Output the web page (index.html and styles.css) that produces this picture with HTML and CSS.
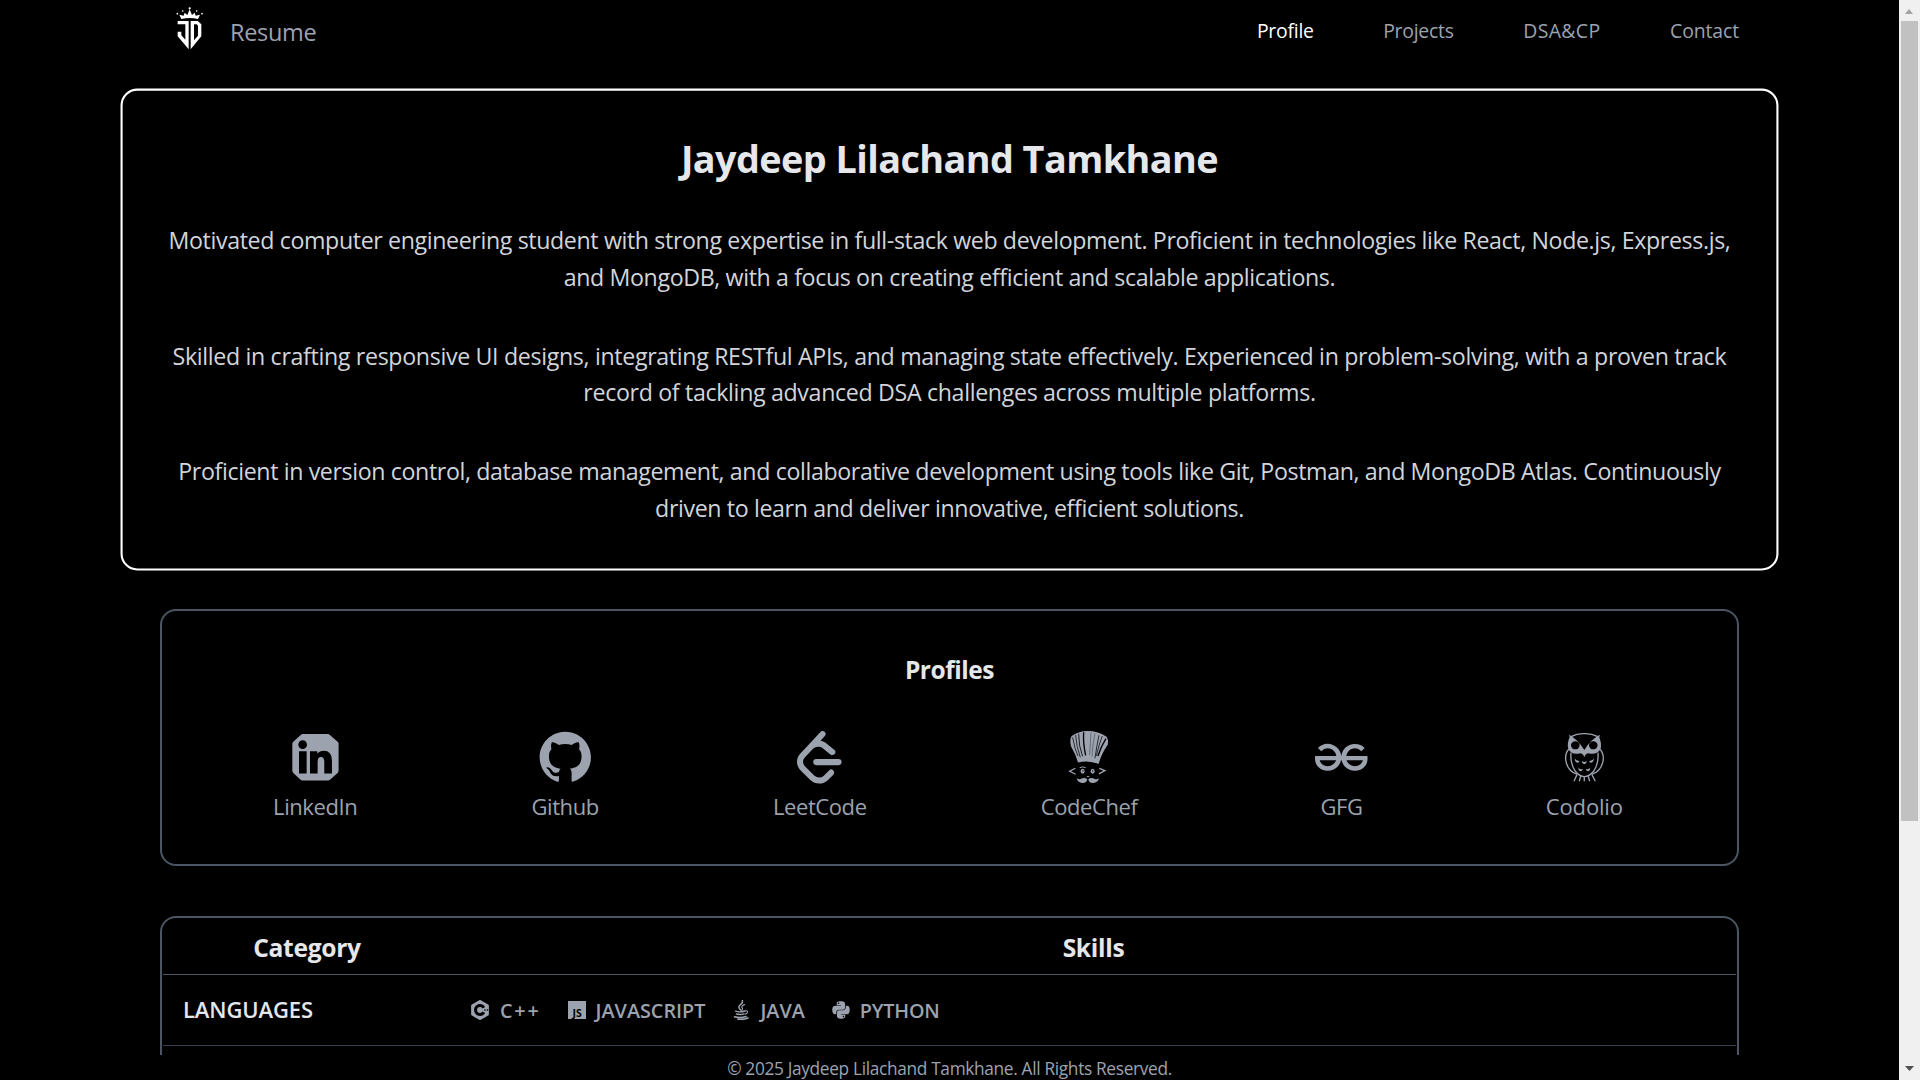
FILE: index.html
```
<!DOCTYPE html>
<html lang="en">
<head>
<meta charset="utf-8">
<title>Resume</title>
<link rel="stylesheet" href="styles.css">
</head>
<body>
<div class="viewport">
  <div class="page">
    <header class="navbar">
      <a class="brand">
        <svg class="logo" viewBox="48 18 84 132">
          <path fill="#fff" d="M64 57L58 44L71 47L74 38L82 45L89 28L96 45L104 38L107 47L120 44L114 57Q89 51 64 57z"/>
          <g fill="#fff"><circle cx="52" cy="41" r="2.5"/><circle cx="68" cy="33" r="2.5"/><circle cx="89" cy="25" r="3.4"/><circle cx="110" cy="33" r="2.5"/><circle cx="126" cy="41" r="2.5"/></g>
          <path fill="#fff" d="M53 63H86V148L53 109V95H64V106L76 119V73H53zM92 63H113L124 73V109L92 148zM102 73V121L114 107V77L110 73z" fill-rule="evenodd"/>
        </svg>
        <span class="brand-name">Resume</span>
      </a>
      <nav class="links">
        <a class="link active">Profile</a>
        <a class="link">Projects</a>
        <a class="link wide">DSA&amp;CP</a>
        <a class="link">Contact</a>
      </nav>
    </header>

    <main class="content">
      <section class="hero">
        <h1 class="hero-title">Jaydeep Lilachand Tamkhane</h1>
        <p class="hero-text">Motivated computer engineering student with strong expertise in full-stack web development. Proficient in technologies like React, Node.js, Express.js,<br>and MongoDB, with a focus on creating efficient and scalable applications.</p>
        <p class="hero-text loose">Skilled in crafting responsive UI designs, integrating RESTful APIs, and managing state effectively. Experienced in problem-solving, with a proven track<br>record of tackling advanced DSA challenges across multiple platforms.</p>
        <p class="hero-text">Proficient in version control, database management, and collaborative development using tools like Git, Postman, and MongoDB Atlas. Continuously<br>driven to learn and deliver innovative, efficient solutions.</p>
      </section>

      <section class="profiles">
        <h2 class="section-title">Profiles</h2>
        <div class="profile-list">
          <a class="profile">
            <svg class="icon" viewBox="147 93 158 158"><path fill="currentColor" fill-rule="evenodd" d="M188 102H264Q267 102 269 104L293 125Q296 128 296 132V212Q296 216 293 219L271 239Q268 242 264 242H188Q184 242 181 239L160 219Q157 216 157 212V132Q157 128 160 125L183 104Q185 102 188 102zM188 121A13 13 0 1 0 188 147A13 13 0 1 0 188 121zM177 154V221H200V154zM210 154V221H233V186Q233 171 243 171Q253 171 253 186V221H276V181Q276 152 251 152Q239 152 232 161V154z"/></svg>
            <span>LinkedIn</span>
          </a>
          <a class="profile">
            <svg class="icon" viewBox="-.3 0 24.6 24.6"><path fill="currentColor" d="M12 .297c-6.63 0-12 5.373-12 12 0 5.303 3.438 9.8 8.205 11.385.6.113.82-.258.82-.577 0-.285-.01-1.04-.015-2.04-3.338.724-4.042-1.61-4.042-1.61C4.422 18.07 3.633 17.7 3.633 17.7c-1.087-.744.084-.729.084-.729 1.205.084 1.838 1.236 1.838 1.236 1.07 1.835 2.809 1.305 3.495.998.108-.776.417-1.305.76-1.605-2.665-.3-5.466-1.332-5.466-5.93 0-1.31.465-2.38 1.235-3.22-.135-.303-.54-1.523.105-3.176 0 0 1.005-.322 3.3 1.23.96-.267 1.98-.399 3-.405 1.02.006 2.04.138 3 .405 2.28-1.552 3.285-1.23 3.285-1.23.645 1.653.24 2.873.12 3.176.765.84 1.23 1.91 1.23 3.22 0 4.61-2.805 5.625-5.475 5.92.42.36.81 1.096.81 2.22 0 1.606-.015 2.896-.015 3.286 0 .315.21.69.825.57C20.565 22.092 24 17.592 24 12.297c0-6.627-5.373-12-12-12"/></svg>
            <span>Github</span>
          </a>
          <a class="profile">
            <svg class="icon" viewBox="0 0 24 24"><path fill="currentColor" d="M13.483 0a1.374 1.374 0 0 0-.961.438L7.116 6.226l-3.854 4.126a5.266 5.266 0 0 0-1.209 2.104 5.35 5.35 0 0 0-.125.513 5.527 5.527 0 0 0 .062 2.362 5.83 5.83 0 0 0 .349 1.017 5.938 5.938 0 0 0 1.271 1.818l4.277 4.193.039.038c2.248 2.165 5.852 2.133 8.063-.074l2.396-2.392c.54-.54.54-1.414.003-1.955a1.378 1.378 0 0 0-1.951-.003l-2.396 2.392a3.021 3.021 0 0 1-4.205.038l-.02-.019-4.276-4.193c-.652-.64-.972-1.469-.948-2.263a2.68 2.68 0 0 1 .066-.523 2.545 2.545 0 0 1 .619-1.164L9.13 8.114c1.058-1.134 3.204-1.27 4.43-.278l3.501 2.831c.593.48 1.461.387 1.94-.207a1.384 1.384 0 0 0-.207-1.943l-3.5-2.831c-.8-.647-1.766-1.045-2.774-1.202l2.015-2.158A1.384 1.384 0 0 0 13.483 0zm-2.866 12.815a1.38 1.38 0 0 0-1.38 1.382 1.38 1.38 0 0 0 1.38 1.382H20.79a1.38 1.38 0 0 0 1.38-1.382 1.38 1.38 0 0 0-1.38-1.382z"/></svg>
            <span>LeetCode</span>
          </a>
          <a class="profile">
            <svg class="icon" viewBox="969 93 158 158">
              <path fill="currentColor" d="M1014 188Q1008 165 993 139Q988 118 995 108Q1018 93 1042 93Q1076 93 1100 110Q1107 121 1103 135Q1084 162 1076 192Q1044 179 1014 188z"/>
              <g fill="none" stroke="#000" stroke-width="2.2"><path d="M998 112Q1004 148 1014 168M1007 105Q1009 140 1021 172M1077 106Q1070 140 1065 175M1087 108Q1077 134 1069 168"/><path d="M1098 116Q1083 140 1074 168" stroke-width="4"/><path d="M1016 101Q1016 140 1028 169" stroke-width="2.5"/><path d="M1053 98L1049 165M1065 100Q1057 140 1056 170" stroke-width="1"/><path d="M1031 97Q1029 130 1037 166" stroke-width="4"/></g>
              <g fill="none" stroke="currentColor" stroke-width="4"><path d="M1006 205L989 214L1007 223M1078 205L1095 212L1077 222"/><path stroke-width="3" d="M1019 203Q1028 199 1037 203M1041 230H1048"/></g>
              <ellipse cx="1028" cy="214" rx="6" ry="7.5" fill="currentColor"/><ellipse cx="1058" cy="214" rx="6" ry="7.5" fill="currentColor"/>
              <circle cx="1029" cy="213" r="2" fill="#000"/><circle cx="1058" cy="213" r="2" fill="#000"/>
              <path fill="currentColor" d="M1010 235Q1019 240 1025 236Q1034 231 1042 238Q1040 250 1027 249Q1013 248 1010 235zM1077 235Q1068 240 1062 236Q1053 231 1045 238Q1047 250 1060 249Q1074 248 1077 235z"/>
            </svg>
            <span>CodeChef</span>
          </a>
          <a class="profile">
            <svg class="icon" viewBox="0 0 24 24"><path fill="currentColor" d="M21.45 14.315c-.143.28-.334.532-.565.745a3.691 3.691 0 0 1-1.104.695 4.51 4.51 0 0 1-3.116-.016 3.79 3.79 0 0 1-2.135-2.078 3.571 3.571 0 0 1-.13-.353h7.418a4.26 4.26 0 0 1-.368 1.008zm-11.99-.654a3.793 3.793 0 0 1-2.134 2.078 4.51 4.51 0 0 1-3.117.016 3.7 3.7 0 0 1-1.104-.695 2.652 2.652 0 0 1-.564-.745 4.221 4.221 0 0 1-.368-1.006H9.59c-.038.12-.08.238-.13.352zm14.501-1.758a3.849 3.849 0 0 0-.082-.475l-9.634-.008a3.932 3.932 0 0 1 1.143-2.348c.363-.35.79-.625 1.26-.809a3.97 3.97 0 0 1 4.484.957l1.521-1.49a5.7 5.7 0 0 0-1.922-1.357 6.283 6.283 0 0 0-2.544-.49 6.35 6.35 0 0 0-2.405.457 6.007 6.007 0 0 0-1.963 1.276 6.142 6.142 0 0 0-1.325 1.94 5.862 5.862 0 0 0-.466 1.864h-.063a5.857 5.857 0 0 0-.467-1.865 6.13 6.13 0 0 0-1.325-1.939A6 6 0 0 0 8.21 6.34a6.698 6.698 0 0 0-4.949.031A5.708 5.708 0 0 0 1.34 7.73l1.52 1.49a4.166 4.166 0 0 1 4.484-.958c.47.184.898.46 1.26.81.368.36.66.792.859 1.268.146.344.242.708.285 1.08l-9.635.008A4.714 4.714 0 0 0 0 12.457a6.493 6.493 0 0 0 .345 2.127 4.927 4.927 0 0 0 1.08 1.783c.528.56 1.17 1 1.88 1.293a6.454 6.454 0 0 0 2.504.457c.824.005 1.64-.15 2.404-.457a5.986 5.986 0 0 0 1.964-1.277 6.116 6.116 0 0 0 1.686-3.076h.273a6.13 6.13 0 0 0 1.686 3.077 5.99 5.99 0 0 0 1.964 1.276 6.345 6.345 0 0 0 2.405.457 6.45 6.45 0 0 0 2.502-.457 5.42 5.42 0 0 0 1.882-1.293 4.928 4.928 0 0 0 1.08-1.783A6.52 6.52 0 0 0 24 12.457a4.757 4.757 0 0 0-.039-.554z"/></svg>
            <span>GFG</span>
          </a>
          <a class="profile last">
            <svg class="icon" viewBox="840 93 158 158">
              <path fill="currentColor" fill-rule="evenodd" d="M873 104Q900 118 919 150Q938 118 966 104L964 112Q972 132 968 146Q959 164 937 161Q926 158 922 165L919 172L916 165Q912 158 901 161Q879 164 871 146Q866 132 875 112zM892 124A13 12 0 1 0 892 148A13 12 0 1 0 892 124zM946 124A13 12 0 1 0 946 148A13 12 0 1 0 946 124z"/>
              <g fill="none" stroke="currentColor" stroke-width="4"><path d="M879 110Q898 100 919 101Q940 100 960 110"/><path d="M873 147Q858 163 865 189Q873 216 898 223M965 147Q981 163 974 189Q966 216 941 223"/><path d="M879 158Q876 190 892 214Q905 230 919 230Q934 230 947 214Q963 190 960 158"/><path d="M897 224L888 244M908 229L904 244M919 230V244M931 229L935 244M942 224L952 244"/></g>
              <g fill="currentColor"><path d="M890 175Q894 184 905 183Q902 190 896 188Q890 184 890 175zM912 182Q919 190 926 182Q926 192 919 193Q912 192 912 182zM948 175Q944 184 933 183Q936 190 942 188Q948 184 948 175zM901 203Q905 210 915 207Q912 215 906 214Q901 211 901 203zM937 203Q933 210 923 207Q926 215 932 214Q937 211 937 203z"/></g>
            </svg>
            <span>Codolio</span>
          </a>
        </div>
      </section>

      <section class="skills">
        <div class="row head"><div class="cell">Category</div><div class="cell">Skills</div></div>
        <div class="row">
          <div class="category">LANGUAGES</div>
          <div class="skill-list">
            <span class="skill"><svg viewBox="0 0 24 24"><path fill="currentColor" fill-rule="evenodd" d="M22.394 6c-.167-.29-.398-.543-.652-.69L12.926.22c-.509-.294-1.34-.294-1.848 0L2.26 5.31c-.508.293-.923 1.013-.923 1.6v10.18c0 .294.104.62.271.91.167.29.398.543.652.69l8.816 5.09c.508.293 1.34.293 1.848 0l8.816-5.09c.254-.147.485-.4.652-.69.167-.29.27-.616.27-.91V6.91c.003-.294-.1-.62-.268-.91zM12 19.11c-3.92 0-7.109-3.19-7.109-7.11 0-3.92 3.19-7.11 7.11-7.11a7.133 7.133 0 016.156 3.553l-3.076 1.78a3.567 3.567 0 00-3.08-1.78A3.56 3.56 0 008.444 12 3.56 3.56 0 0012 15.555a3.57 3.57 0 003.08-1.778l3.078 1.78A7.135 7.135 0 0112 19.11zm7.11-6.715h-.79v.79h-.79v-.79h-.79v-.79h.79v-.79h.79v.79h.79zm2.962 0h-.79v.79h-.79v-.79h-.79v-.79h.79v-.79h.79v.79h.79z"/></svg><span class="spaced">C++</span></span>
            <span class="skill"><svg viewBox="0 0 20 20"><path fill="currentColor" d="M1 1h18v18H1z"/><text class="js" x="5.6" y="17.4">JS</text></svg><span>JAVASCRIPT</span></span>
            <span class="skill"><svg viewBox="0 0 20 20"><g fill="none" stroke="currentColor" stroke-linecap="round"><path stroke-width="1.5" d="M11.4.6Q12 3 9 5Q6.500 7 9.600 10"/><path stroke-width="1.200" d="M13.500 4.600Q9.500 6.200 11.400 8.200Q12 9 10.800 10.300"/><path stroke-width="1.400" d="M4.500 11.200Q9 12.600 14 11M5.500 14Q9.500 15 13 13.800"/><path stroke-width="1.100" d="M14.400 10.800Q17.300 10.600 16.400 12.600Q15.800 13.800 14.300 14.200"/><path stroke-width="1.600" d="M3.500 16.700Q9 18.400 15 16.600M7 19.300Q13 19.700 17 18"/></g></svg><span>JAVA</span></span>
            <span class="skill"><svg viewBox="-32 0 512 512"><path fill="currentColor" d="M439.800 200.500c-7.700-30.900-22.300-54.200-53.400-54.200h-40.100v47.400c0 36.800-31.200 67.800-66.800 67.800H172.700c-29.200 0-53.400 25-53.400 54.300v101.800c0 29 25.200 46 53.400 54.300 33.800 9.900 66.300 11.700 106.800 0 26.900-7.800 53.400-23.500 53.400-54.300v-40.700H226.200v-13.600h160.200c31.100 0 42.600-21.700 53.400-54.200 11.200-33.500 10.700-65.700 0-108.600zM286.200 404c11.100 0 20.100 9.100 20.100 20.300 0 11.300-9 20.400-20.100 20.400-11 0-20.100-9.200-20.100-20.400.1-11.300 9.100-20.300 20.100-20.300zM167.800 248.100h106.800c29.700 0 53.400-24.500 53.400-54.300V91.900c0-29-24.400-50.700-53.400-55.600-35.800-5.900-74.700-5.600-106.800.1-45.200 8-53.400 24.700-53.400 55.600v40.700h106.900v13.600h-147c-31.100 0-58.300 18.700-66.800 54.200-9.800 40.700-10.200 66.100 0 108.600 7.600 31.600 25.700 54.200 56.800 54.200H101v-48.800c0-35.300 30.500-66.400 66.800-66.400zm-6.700-142.600c-11.100 0-20.100-9.100-20.100-20.300.1-11.300 9-20.400 20.100-20.400 11 0 20.100 9.200 20.100 20.400s-9 20.300-20.100 20.300z"/></svg><span class="tight">PYTHON</span></span>
          </div>
        </div>
      </section>
    </main>
    <footer class="footer">© 2025 Jaydeep Lilachand Tamkhane. All Rights Reserved.</footer>
  </div>
  <div class="scrollbar">
    <svg class="arrow" viewBox="0 0 21 21"><path fill="#a3a3a3" d="M6 14h8L10 9z"/></svg>
    <div class="thumb"></div>
    <svg class="arrow down" viewBox="0 0 21 21"><path fill="#505050" d="M6 7h9l-4.500 5z"/></svg>
  </div>
</div>
</body>
</html>
```
FILE: styles.css
```
* { box-sizing: border-box; margin: 0; }
body { background: #000; font-family: "Open Sans", "Noto Sans", sans-serif; color: #9ca3af; overflow: hidden; }
.viewport { display: flex; height: 1080px; }
.page { width: 1899px; height: 1080px; display: flex; flex-direction: column; }

.navbar { height: 64px; padding: 0 160px 0 176px; display: flex; justify-content: space-between; flex: none; }
.brand { display: flex; align-items: flex-start; gap: 26px; }
.logo { width: 28px; height: 44px; margin-top: 6px; }
.brand-name { font-size: 23.5px; line-height: 32px; letter-spacing: -.3px; margin-top: 16px; }
.links { display: flex; gap: 69.5px; padding-top: 16px; }
.link { font-size: 19.4px; line-height: 30px; letter-spacing: -.25px; }
.link.wide { letter-spacing: .4px; }
.link:last-child { letter-spacing: -.1px; }
.link.active { color: #fff; }

.content { height: 991px; padding: 36px 160px 0; display: flex; flex-direction: column; gap: 50px; overflow: hidden; }
.hero { height: 459px; flex: none; border: 2px solid #fff; border-radius: 16px; padding-top: 40px; text-align: center; transform: scale(1.05); display: flex; flex-direction: column; gap: 40px; }
.hero-title { color: #e5e7eb; font-size: 36px; font-weight: 700; line-height: 49px; letter-spacing: -.55px; margin-bottom: -4px; }
.hero-text { color: #d1d5db; font-size: 22.1px; line-height: 35px; letter-spacing: -.362px; white-space: nowrap; }
.hero-text.loose { letter-spacing: -.325px; }

.profiles { height: 257px; flex: none; border: 2px solid #4b5563; border-radius: 16px; padding: 40px 25px 0; text-align: center; }
.section-title { color: #e5e7eb; font-size: 24.5px; line-height: 38px; letter-spacing: -.45px; }
.profile-list { display: flex; justify-content: space-around; margin: 42px 2px 0 -1px; }
.profile { display: flex; flex-direction: column; align-items: center; gap: 7px; min-width: 60px; font-size: 22px; line-height: 30px; letter-spacing: -.42px; }
.profile.last { letter-spacing: -.15px; }
.icon { width: 52.6px; height: 52.6px; }

.skills { height: 300px; flex: none; border: 2px solid #4b5563; border-radius: 16px; padding: 1px; }
.row { display: grid; grid-template-columns: 288px 1fr; align-items: center; height: 71px; border-bottom: 1px solid #374151; }
.row.head { height: 56px; padding-top: 2px; border-color: #4b5563; color: #e5e7eb; font-size: 24.6px; font-weight: 700; letter-spacing: -.3px; text-align: center; }
.category { padding: 0 0 2px 20px; color: #e5e7eb; font-size: 22px; font-weight: 600; letter-spacing: -.1px; }
.skill-list { display: flex; gap: 26px; padding-left: 19px; }
.skill { display: flex; align-items: center; gap: 9px; font-size: 19.800px; font-weight: 600; line-height: 28px; }
.skill span { padding-top: 1px; }
.skill .spaced { letter-spacing: 1.800px; margin-left: 1px; }
.skill .tight { letter-spacing: -.2px; }
.skill svg { width: 20px; height: 20px; }
.js { font: 700 10.500px "Open Sans", sans-serif; fill: #000; }

.footer { height: 25px; text-align: center; font-size: 17.3px; line-height: 27px; letter-spacing: -.33px; }

.scrollbar { width: 21px; background: #f0f0f0; display: flex; flex-direction: column; }
.arrow { width: 21px; height: 21px; flex: none; }
.thumb { height: 800px; margin: 0 2px; background: #c1c1c1; }
.arrow.down { margin-top: auto; }
```
